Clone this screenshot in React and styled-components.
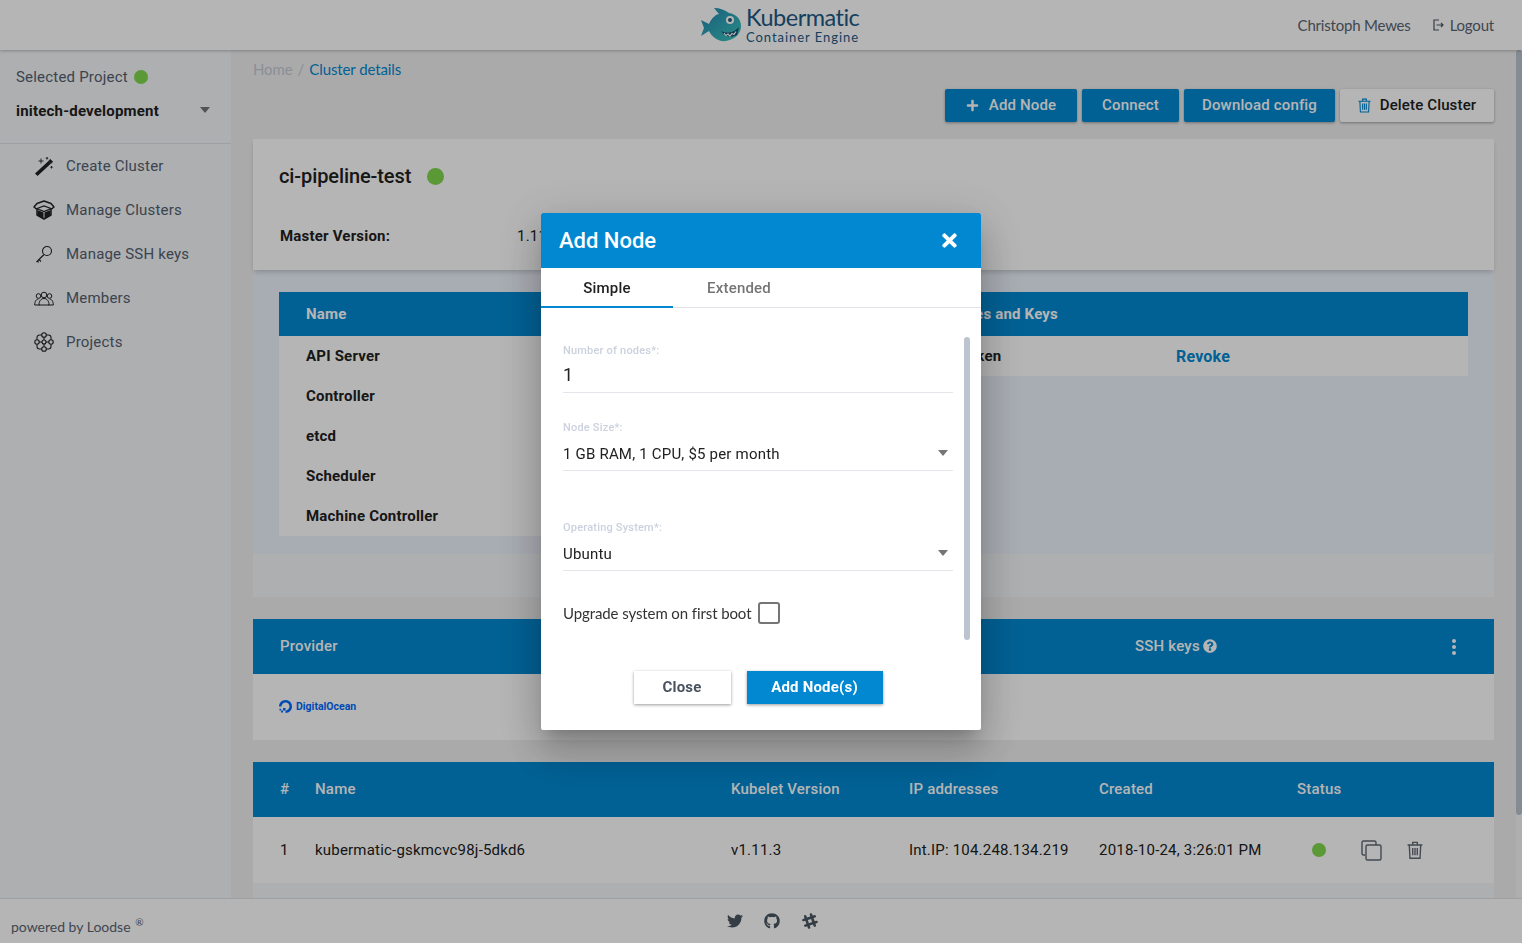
import React from 'react'
import styled, { createGlobalStyle } from 'styled-components'
import { FaTimes, FaPlus, FaTwitter, FaGithub, FaSlackHash, FaQuestionCircle } from 'react-icons/fa'
import { SiDigitalocean } from 'react-icons/si'

const Global = createGlobalStyle`
    html, body { margin: 0; height: 100%; overflow: hidden; }
    body { font-family: Roboto, "Liberation Sans", sans-serif; color: #212121; letter-spacing: .2px; }
    * { box-sizing: border-box; }
`
const narrow = `Lato, "Open Sans", sans-serif`
const blue = '#0288d1'

const Page = styled.div`
    display: flex;
    flex-direction: column;
    height: 100vh;
    background: #f0f0f0;
`
const Top = styled.header`
    display: flex;
    align-items: center;
    justify-content: space-between;
    position: relative;
    z-index: 2;
    height: 50px;
    flex: none;
    padding: 0 28px 0 0;
    background: #fff;
    box-shadow: 0 1px 3px rgba(0,0,0,.25);
`
const Brand = styled.div`
    display: flex;
    align-items: flex-start;
    margin-left: 700px;
    height: 50px;
    padding-top: 6px;
`
const BrandText = styled.div`
    display: flex;
    flex-direction: column;
    margin-left: 2px;
    margin-top: -1px;
    color: #205a85;
    font-family: ${narrow};
`
const BrandName = styled.span`
    font-size: 23.5px;
    line-height: 24px;
    letter-spacing: -.5px;
`
const BrandSub = styled.span`
    font-size: 13px;
    line-height: 17px;
    letter-spacing: .95px;
`
const UserBox = styled.div`
    display: flex;
    align-items: center;
    font: 15px ${narrow};
    letter-spacing: -.2px;
    color: #5a6472;
`
const Logout = styled.span`
    display: flex;
    align-items: center;
    gap: 6px;
    margin-left: 22px;
`
const Middle = styled.div`
    display: flex;
    flex: 1;
    min-height: 0;
`
const Side = styled.aside`
    width: 231px;
    flex: none;
    background: #f5f7fa;
`
const ProjectBox = styled.div`
    height: 94px;
    padding: 18px 16px 0;
    border-bottom: 1px solid #dfe3e8;
`
const ProjectLabel = styled.div`
    display: flex;
    align-items: center;
    gap: 6px;
    font-size: 15px;
    line-height: 18px;
    color: #53606f;
`
const ProjectPick = styled.div`
    display: flex;
    align-items: center;
    justify-content: space-between;
    margin-top: 16px;
    padding-right: 5px;
    font-size: 15px;
    font-weight: 700;
    line-height: 18px;
`
const Caret = styled.span`
    width: 0;
    height: 0;
    margin-bottom: 3px;
    border-left: 5.5px solid transparent;
    border-right: 5.5px solid transparent;
    border-top: 6px solid #757575;
`
const SideList = styled.nav`
    padding-top: 0;
`
const SideItem = styled.div`
    display: flex;
    align-items: center;
    height: 44px;
    padding-left: 33px;
    font-size: 15px;
    color: #53606f;
`
const SideIcon = styled.span`
    display: flex;
    justify-content: center;
    width: 22px;
    margin-right: 11px;
    color: #212121;
`
const Main = styled.main`
    flex: 1;
    min-width: 0;
    padding: 10px 22px 0;
    overflow: hidden;
`
const Crumbs = styled.div`
    display: flex;
    gap: 5px;
    height: 18px;
    font: 15px/18px ${narrow};
    letter-spacing: -.1px;
    color: #c4cad2;
`
const CrumbNow = styled.span`
    color: ${blue};
`
const Actions = styled.div`
    display: flex;
    justify-content: flex-end;
    gap: 5px;
    margin-top: 11px;
`
const ActionButton = styled.button`
    display: flex;
    align-items: center;
    justify-content: center;
    gap: ${p => p.$gap || 9}px;
    width: ${p => p.$w}px;
    height: 33px;
    padding: 0 0 2px;
    border: 0;
    border-radius: 2px;
    background: ${p => (p.$plain ? '#fff' : blue)};
    color: ${p => (p.$plain ? '#212121' : '#fff')};
    font: 500 15px Roboto, sans-serif;
    letter-spacing: .15px;
    box-shadow: 0 1px 3px rgba(0,0,0,.35);
    svg { margin-top: 2px; }
`
const ClusterCard = styled.section`
    position: relative;
    z-index: 1;
    height: 131px;
    margin-top: 17px;
    padding: 24px 27px 0 26px;
    background: #fff;
    box-shadow: 0 3px 5px -1px rgba(0,0,0,.18);
`
const ClusterName = styled.h1`
    display: flex;
    align-items: center;
    gap: 16px;
    margin: 0;
    height: 26px;
    font-size: 20px;
    font-weight: 500;
    letter-spacing: -.1px;
`
const Dot = styled.span`
    display: inline-block;
    flex: none;
    width: ${p => p.$size || 14}px;
    height: ${p => p.$size || 14}px;
    border-radius: 50%;
    background: #80d64c;
`
const Facts = styled.div`
    display: grid;
    grid-template-columns: 237px 1fr;
    margin: 37px 0 0 1px;
    font-size: 15px;
    line-height: 20px;
`
const FactName = styled.span`
    font-weight: 700;
`
const HealthArea = styled.section`
    height: 284px;
    padding: 22px 26px 0;
    background: #edf3fc;
`
const HealthHead = styled.div`
    display: grid;
    grid-template-columns: 604px 1fr;
    align-items: center;
    height: 44px;
    padding-left: 27px;
    background: ${blue};
    color: #fff;
    font-size: 15px;
    font-weight: 700;
`
const HealthBody = styled.div`
    display: grid;
    grid-template-columns: 605px 1fr;
    align-items: start;
`
const HealthCol = styled.div`
    display: flex;
    flex-direction: column;
    background: #fff;
`
const HealthRow = styled.div`
    display: grid;
    grid-template-columns: ${p => p.$cols};
    align-items: center;
    height: 40px;
    padding-left: 27px;
    font-size: 15px;
    font-weight: 700;
`
const Revoke = styled.span`
    color: ${blue};
    font-size: 16px;
`
const Spare = styled.div`
    height: ${p => p.$h}px;
    background: #f5f7fa;
`
const TableHead = styled.div`
    display: grid;
    grid-template-columns: ${p => p.$cols};
    align-items: center;
    height: 55px;
    margin-top: ${p => p.$top || 22}px;
    padding: 0 0 2px 27px;
    background: ${blue};
    color: #fff;
    font-size: 15px;
    font-weight: 500;
`
const HeadHelp = styled.span`
    display: flex;
    align-items: center;
    gap: 3px;
`
const Kebab = styled.svg`
    display: block;
    margin-top: 2px;
`
const ProviderRow = styled.div`
    display: flex;
    align-items: center;
    height: 66px;
    padding: 0 0 2px 26px;
    background: #fff;
`
const OceanLogo = styled.span`
    display: flex;
    align-items: center;
    gap: 4px;
    color: #0069ff;
    font-size: 10.5px;
    font-weight: 700;
    letter-spacing: 0;
`
const NodeRow = styled.div`
    display: grid;
    grid-template-columns: ${p => p.$cols};
    align-items: center;
    height: 66px;
    padding-left: 27px;
    background: #fff;
    font-size: 15px;
`
const NodeTools = styled.span`
    display: flex;
    align-items: center;
    color: #5f6874;
`
const ToolGap = styled.span`
    display: flex;
    margin-left: ${p => p.$left}px;
`
const ScrollTrack = styled.div`
    width: 6px;
    flex: none;
    background: #f5f7fa;
`
const ScrollThumb = styled.div`
    height: ${p => p.$h}px;
    border-radius: 3px;
    background: #bcc4d0;
`
const Bottom = styled.footer`
    display: flex;
    align-items: center;
    position: relative;
    z-index: 2;
    height: 45px;
    flex: none;
    padding-left: 11px;
    border-top: 1px solid #dfe3e8;
    background: #fff;
    color: #5a6472;
    font: 14px ${narrow};
    letter-spacing: 0;
`
const Powered = styled.span`
    width: 716px;
    padding-top: 11px;
    sup {
        font-size: 10px;
        margin-left: 1px;
        line-height: 0;
    }
`
const Social = styled.span`
    display: flex;
    align-items: center;
    gap: 21px;
    color: #4a5560;
    font-size: 16px;
`
const Shade = styled.div`
    position: fixed;
    inset: 0;
    z-index: 10;
    display: flex;
    align-items: center;
    justify-content: center;
    background: rgba(0,0,0,.29);
`
const Dialog = styled.div`
    position: relative;
    width: 440px;
    height: 517px;
    border-radius: 2px;
    background: #fff;
    box-shadow: 0 11px 15px -7px rgba(0,0,0,.2), 0 24px 38px 3px rgba(0,0,0,.14), 0 9px 46px 8px rgba(0,0,0,.12);
`
const DialogHead = styled.div`
    display: flex;
    align-items: center;
    justify-content: space-between;
    height: 55px;
    padding: 0 21px 0 18px;
    border-radius: 2px 2px 0 0;
    background: ${blue};
    color: #fff;
    font-size: 22px;
    font-weight: 500;
    letter-spacing: 0;
`
const Tabs = styled.div`
    display: flex;
    height: 40px;
    border-bottom: 1px solid #e0e3e7;
`
const Tab = styled.div`
    display: flex;
    align-items: center;
    justify-content: center;
    width: 132px;
    height: 40px;
    padding-top: ${p => (p.$on ? 2 : 0)}px;
    font-size: 15px;
    font-weight: 500;
    color: ${p => (p.$on ? '#212121' : '#757575')};
    border-bottom: ${p => (p.$on ? `2px solid ${blue}` : '0')};
`
const Form = styled.div`
    padding: 36px 28px 0 22px;
`
const Field = styled.div`
    margin-bottom: ${p => p.$after}px;
    border-bottom: 1px solid #e3e6ea;
    height: ${p => p.$h}px;
`
const FieldLabel = styled.div`
    font-size: 11px;
    font-weight: 500;
    line-height: 14px;
    color: #cbd2de;
`
const FieldValue = styled.div`
    display: flex;
    align-items: center;
    justify-content: space-between;
    margin-top: ${p => p.$top}px;
    padding-right: 5px;
    font-size: ${p => p.$size || 15}px;
    line-height: 20px;
`
const CheckLine = styled.label`
    display: flex;
    align-items: center;
    gap: 7px;
    font: 15px ${narrow};
    letter-spacing: -.1px;
    color: #333;
`
const CheckBox = styled.span`
    width: 22px;
    height: 22px;
    margin-top: 1px;
    border: 2px solid #757575;
    border-radius: 3px;
`
const DialogBar = styled.div`
    position: absolute;
    top: 124px;
    right: 11px;
    width: 6px;
    height: 303px;
    border-radius: 3px;
    background: #bcc4d0;
`
const DialogActions = styled.div`
    display: flex;
    justify-content: center;
    gap: 16px;
    margin: 47px 0 0 -6px;
`
const DialogButton = styled.button`
    width: ${p => p.$w}px;
    height: 33px;
    padding: 0 0 2px;
    border: 0;
    background: ${p => (p.$primary ? blue : '#fff')};
    color: ${p => (p.$primary ? '#fff' : '#4a5260')};
    font: 700 15px Roboto, sans-serif;
    letter-spacing: .2px;
    box-shadow: 0 1px 3px rgba(0,0,0,.4);
`

const Shark = () => (
    <svg width="44" height="38" viewBox="0 0 44 38">
        <defs>
            <linearGradient id="shark" x1="0" y1="0" x2="1" y2="1">
                <stop offset="0" stopColor="#2285b0" />
                <stop offset="1" stopColor="#3cc6bd" />
            </linearGradient>
        </defs>
        <path d="M1 14 L9 18 C12 11 17 8 19 8 L14 2 C20 2 25 4 29 7 C36 8 41 13 41 20 C41 27 36 33 26 35 C18 36 12 31 9 25 L1 30 L4 22 Z" fill="url(#shark)" />
        <circle cx="30" cy="14" r="4" fill="#fff" />
        <circle cx="30" cy="14" r="2" fill="#1f5a7c" />
        <path d="M21 25 C27 28 34 27 39 21 L37 29 C31 32 25 31 21 25 Z" fill="#17506d" />
        <path d="M24 27 L26 29.5 L28 28 L30 30 L32 27.5 L34 28.5 L36 25.5" fill="none" stroke="#fff" strokeWidth="1.2" />
    </svg>
)

const LogoutIcon = () => (
    <svg width="11" height="12" viewBox="0 0 11 12" fill="none" stroke="#4c5665" strokeWidth="1.2">
        <path d="M6 1H1v10h5" />
        <path d="M3.5 6H10M8 4l2 2-2 2" />
    </svg>
)

const WandIcon = () => (
    <svg width="20" height="19" viewBox="0 0 20 19">
        <path d="M1 16.500 14.500 4 17 6.500 3.500 19Z" fill="#212121" />
        <path d="M14.500 4 16.300 2.300 18.800 4.800 17 6.500Z" fill="#212121" stroke="#212121" strokeWidth=".5" />
        <path d="M7 1.500v5M4.500 4h5M13 0v2.500M11.800 1.200h2.400M17.500 9v2.500M16.300 10.200h2.400" stroke="#212121" strokeWidth=".9" fill="none" />
    </svg>
)

const BoxIcon = () => (
    <svg width="22" height="20" viewBox="0 0 22 20">
        <path d="M11 1 4 3.500 1 7l3 2.500V15l7 4 7-4V9.500L21 7l-3-3.500Z" fill="none" stroke="#212121" strokeWidth="1.5" strokeLinejoin="round" />
        <path d="M4 8.500 11 6l7 2.500-7 3Z" fill="none" stroke="#212121" strokeWidth="1.2" />
        <path d="M4.500 10l6 2.500V19L4.500 15.500ZM17.500 10l-6 2.500V19l6-3.500Z" fill="#212121" />
    </svg>
)

const KeyIcon = () => (
    <svg width="18" height="18" viewBox="0 0 18 18" fill="none" stroke="#212121" strokeWidth="1.1">
        <circle cx="12" cy="6" r="4.500" />
        <path d="M9 9.500 1.500 17M4 14.500l2 2M2.200 16l1.500 1.300" />
    </svg>
)

const PeopleIcon = () => (
    <svg width="20" height="15" viewBox="0 0 20 15" fill="none" stroke="#212121" strokeWidth="1">
        <circle cx="10" cy="4" r="2.800" />
        <circle cx="4.500" cy="5" r="2.300" />
        <circle cx="15.500" cy="5" r="2.300" />
        <path d="M5 14c0-4 2-6.500 5-6.500s5 2.500 5 6.500Z" />
        <path d="M5.500 14H.7c0-3.500 1.500-6 3.800-6M14.500 14h4.800c0-3.500-1.500-6-3.800-6" />
    </svg>
)

const ProjectIcon = () => (
    <svg width="20" height="20" viewBox="0 0 20 20" fill="none" stroke="#212121" strokeWidth="1.1">
        <circle cx="10" cy="3" r="2.300" />
        <circle cx="10" cy="10" r="2" />
        <circle cx="10" cy="17" r="2.300" />
        <circle cx="3" cy="10" r="2.200" />
        <circle cx="17" cy="10" r="2.200" />
        <path d="M5.200 10H8M12 10h2.800M10 5.300V8M10 12v2.700M7.700 3H5.500A2.500 2.500 0 0 0 3 5.500v2.300M12.300 3h2.200A2.500 2.500 0 0 1 17 5.500v2.300M7.700 17H5.500A2.500 2.500 0 0 1 3 14.500v-2.300M12.300 17h2.200a2.500 2.500 0 0 0 2.500-2.500v-2.300" />
    </svg>
)

const Trash = ({ color, size }) => (
    <svg width={size} height={size * 1.15} viewBox="0 0 14 16" fill="none" stroke={color} strokeWidth="1.2">
        <path d="M.5 3.500h13M5 3.500V1.200h4v2.300M2 3.500l.6 11.500h8.800L12 3.500" />
        <path d="M5 6v6.500M7 6v6.500M9 6v6.500" />
    </svg>
)

const CopyIcon = () => (
    <svg width="21" height="21" viewBox="0 0 21 21" fill="none" stroke="#5f6874" strokeWidth="1.4">
        <path d="M4 15H2.500A1.500 1.500 0 0 1 1 13.500V2.500A1.500 1.500 0 0 1 2.500 1h11A1.500 1.500 0 0 1 15 2.500V5" />
        <rect x="5" y="5" width="15" height="15" rx="1.500" />
    </svg>
)

const healthNames = ['API Server', 'Controller', 'etcd', 'Scheduler', 'Machine Controller']
const nodeCols = '35px 416px 178px 190px 198px 1fr'
const providerCols = '855px 317px 1fr'

export default function App() {
    const sideItems = [
        { icon: <WandIcon />, label: 'Create Cluster' },
        { icon: <BoxIcon />, label: 'Manage Clusters' },
        { icon: <KeyIcon />, label: 'Manage SSH keys' },
        { icon: <PeopleIcon />, label: 'Members' },
        { icon: <ProjectIcon />, label: 'Projects' },
    ]

    return (
        <Page>
            <Global />
            <Top>
                <Brand>
                    <Shark />
                    <BrandText>
                        <BrandName>Kubermatic</BrandName>
                        <BrandSub>Container Engine</BrandSub>
                    </BrandText>
                </Brand>
                <UserBox>
                    Christoph Mewes
                    <Logout><LogoutIcon />Logout</Logout>
                </UserBox>
            </Top>
            <Middle>
                <Side>
                    <ProjectBox>
                        <ProjectLabel>Selected Project <Dot /></ProjectLabel>
                        <ProjectPick>initech-development <Caret /></ProjectPick>
                    </ProjectBox>
                    <SideList>
                        {sideItems.map(item => (
                            <SideItem key={item.label}>
                                <SideIcon>{item.icon}</SideIcon>
                                {item.label}
                            </SideItem>
                        ))}
                    </SideList>
                </Side>
                <Main>
                    <Crumbs>
                        <span>Home</span>
                        <span>/</span>
                        <CrumbNow>Cluster details</CrumbNow>
                    </Crumbs>
                    <Actions>
                        <ActionButton $w={132} $gap={10}><FaPlus size={13} />Add Node</ActionButton>
                        <ActionButton $w={97}>Connect</ActionButton>
                        <ActionButton $w={151}>Download config</ActionButton>
                        <ActionButton $w={154} $plain><Trash color={blue} size={13} />Delete Cluster</ActionButton>
                    </Actions>
                    <ClusterCard>
                        <ClusterName>ci-pipeline-test <Dot $size={17} /></ClusterName>
                        <Facts>
                            <FactName>Master Version:</FactName>
                            <span>1.11.3</span>
                        </Facts>
                    </ClusterCard>
                    <HealthArea>
                        <HealthHead>
                            <span>Name</span>
                            <span>Certificates and Keys</span>
                        </HealthHead>
                        <HealthBody>
                            <HealthCol>
                                {healthNames.map(name => (
                                    <HealthRow key={name} $cols="1fr"><span>{name}</span></HealthRow>
                                ))}
                            </HealthCol>
                            <HealthCol>
                                <HealthRow $cols="265px 1fr">
                                    <span>Admin Token</span>
                                    <Revoke>Revoke</Revoke>
                                </HealthRow>
                            </HealthCol>
                        </HealthBody>
                    </HealthArea>
                    <Spare $h={43} />
                    <TableHead $cols={providerCols}>
                        <span>Provider</span>
                        <HeadHelp>SSH keys <FaQuestionCircle size={14} /></HeadHelp>
                        <Kebab width="4" height="16" viewBox="0 0 4 16" fill="#fff">
                            <circle cx="2" cy="2" r="2" />
                            <circle cx="2" cy="8" r="2" />
                            <circle cx="2" cy="14" r="2" />
                        </Kebab>
                    </TableHead>
                    <ProviderRow>
                        <OceanLogo><SiDigitalocean size={13} />DigitalOcean</OceanLogo>
                    </ProviderRow>
                    <TableHead $cols={nodeCols}>
                        <span>#</span>
                        <span>Name</span>
                        <span>Kubelet Version</span>
                        <span>IP addresses</span>
                        <span>Created</span>
                        <span>Status</span>
                    </TableHead>
                    <NodeRow $cols={nodeCols}>
                        <span>1</span>
                        <span>kubermatic-gskmcvc98j-5dkd6</span>
                        <span>v1.11.3</span>
                        <span>Int.IP: 104.248.134.219</span>
                        <span>2018-10-24, 3:26:01 PM</span>
                        <NodeTools>
                            <ToolGap $left={15}><Dot /></ToolGap>
                            <ToolGap $left={35}><CopyIcon /></ToolGap>
                            <ToolGap $left={25}><Trash color="#5f6874" size={16} /></ToolGap>
                        </NodeTools>
                    </NodeRow>
                    <Spare $h={20} />
                </Main>
                <ScrollTrack><ScrollThumb $h={765} /></ScrollTrack>
            </Middle>
            <Bottom>
                <Powered>powered by Loodse <sup>®</sup></Powered>
                <Social>
                    <FaTwitter />
                    <FaGithub />
                    <FaSlackHash size={18} />
                </Social>
            </Bottom>
            <Shade>
                <Dialog>
                    <DialogHead>Add Node <FaTimes size={21} /></DialogHead>
                    <Tabs>
                        <Tab $on>Simple</Tab>
                        <Tab>Extended</Tab>
                    </Tabs>
                    <DialogBar />
                    <Form>
                        <Field $h={49} $after={28}>
                            <FieldLabel>Number of nodes*:</FieldLabel>
                            <FieldValue $top={7} $size={18}>1</FieldValue>
                        </Field>
                        <Field $h={50} $after={50}>
                            <FieldLabel>Node Size*:</FieldLabel>
                            <FieldValue $top={9}>1 GB RAM, 1 CPU, $5 per month <Caret /></FieldValue>
                        </Field>
                        <Field $h={50} $after={30}>
                            <FieldLabel>Operating System*:</FieldLabel>
                            <FieldValue $top={9}>Ubuntu <Caret /></FieldValue>
                        </Field>
                        <CheckLine>Upgrade system on first boot <CheckBox /></CheckLine>
                    </Form>
                    <DialogActions>
                        <DialogButton $w={97}>Close</DialogButton>
                        <DialogButton $w={136} $primary>Add Node(s)</DialogButton>
                    </DialogActions>
                </Dialog>
            </Shade>
        </Page>
    )
}
